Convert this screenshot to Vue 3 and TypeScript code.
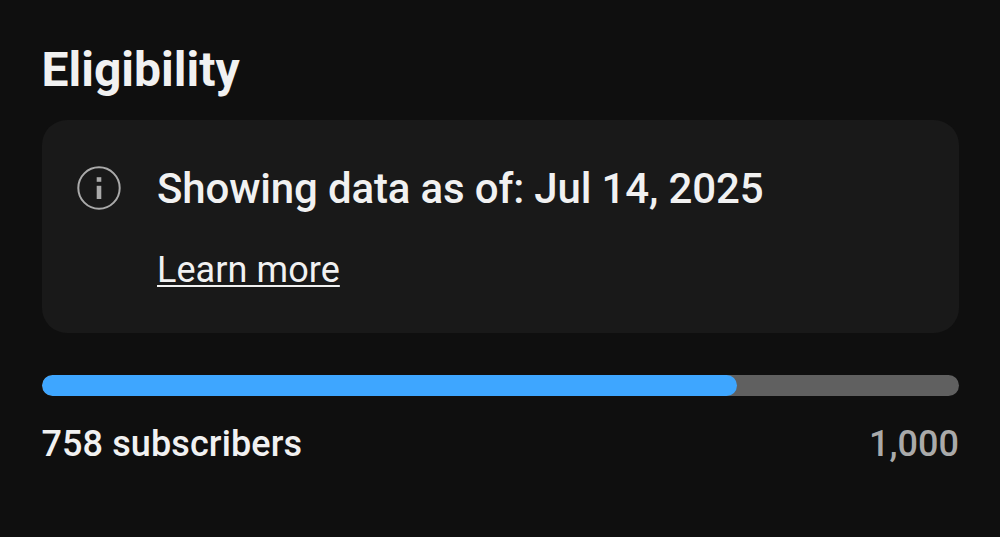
<script setup lang="ts">
import { computed } from "vue";

const subscribers = 758;
const goal = 1000;

const progress = computed(() => `${(subscribers / goal) * 100}%`);
</script>

<template>
  <main class="eligibility">
    <h1 class="title">Eligibility</h1>

    <section class="notice">
      <svg class="info-icon" viewBox="0 0 44 44" aria-hidden="true">
        <circle cx="22" cy="22" r="20.7" />
        <rect x="19.7" y="11.2" width="4.6" height="4.6" />
        <rect x="19.7" y="19.8" width="4.6" height="13.2" />
      </svg>
      <div>
        <p class="notice-text">Showing data as of: Jul 14, 2025</p>
        <a class="learn-more" href="#">Learn more</a>
      </div>
    </section>

    <div class="track">
      <div class="fill" :style="{ width: progress }"></div>
    </div>

    <div class="counts">
      <span class="current">{{ subscribers }} subscribers</span>
      <span class="goal">{{ goal.toLocaleString("en-US") }}</span>
    </div>
  </main>
</template>

<style>
body {
  margin: 0;
  background: #0f0f0f;
}
</style>

<style scoped>
.eligibility {
  box-sizing: border-box;
  height: 537px;
  padding: 41.5px 41px 0 41.5px;
  background: #0f0f0f;
  color: #f1f1f1;
  font-family: Roboto, sans-serif;
}

.title {
  margin: 0 0 22.5px;
  font-size: 48px;
  font-weight: 700;
  line-height: 56px;
}

.notice {
  box-sizing: border-box;
  display: flex;
  gap: 36px;
  height: 213px;
  padding: 44.5px 36px 0 35.5px;
  border-radius: 25px;
  background: #191919;
}

.info-icon {
  flex: none;
  width: 44px;
  height: 44px;
  margin-top: 1px;
  fill: #aaa;
}

.info-icon circle {
  fill: none;
  stroke: #aaa;
  stroke-width: 2;
}

.notice-text {
  margin: 0 0 36.5px;
  font-size: 42px;
  font-weight: 500;
  line-height: 48px;
  letter-spacing: -0.15px;
}

.learn-more {
  display: block;
  width: max-content;
  color: inherit;
  font-size: 36px;
  line-height: 42px;
  letter-spacing: 0.07px;
  text-decoration-thickness: 2px;
  text-underline-offset: 3px;
}

.track {
  height: 21.5px;
  margin-top: 41.5px;
  border-radius: 11px;
  background: #606060;
  overflow: hidden;
}

.fill {
  height: 100%;
  border-radius: 11px;
  background: #3ea6ff;
}

.counts {
  display: flex;
  justify-content: space-between;
  margin-top: 27px;
  font-size: 36px;
  font-weight: 500;
  line-height: 42px;
}

.current {
  letter-spacing: 0.1px;
}

.goal {
  color: #aaa;
}
</style>
